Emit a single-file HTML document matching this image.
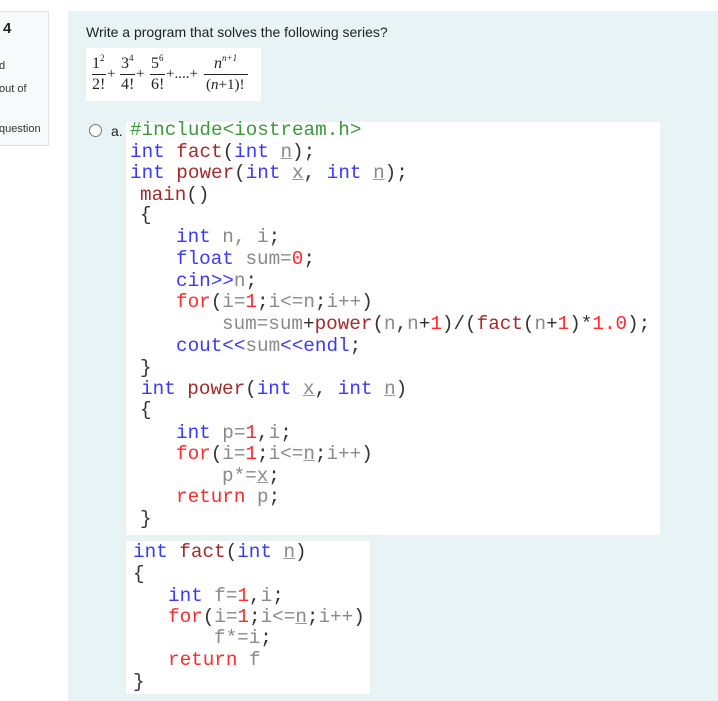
<!DOCTYPE html>
<html><head><style>
body{margin:0;width:718px;height:701px;position:relative;background:#fff;font-family:"Liberation Sans",sans-serif;overflow:hidden}
.lp{position:absolute;left:-2px;top:11px;width:49px;height:133px;background:#f8f9fa;border:1px solid #dee2e6}
.lp div{position:absolute;font-size:11px;color:#333;white-space:nowrap}
.main{position:absolute;left:68px;top:11px;width:650px;height:690px;background:#e7f3f5}
.cb{position:absolute;background:#fff}
.l{position:absolute;font-family:"Liberation Mono",monospace;font-size:19.3px;line-height:22px;white-space:pre;color:#333}
.k{color:#3a3aff}.f{color:#a52a2a}.v{color:#8a8a8a}.n{color:#ff2a2a}.g{color:#3a9a3a}
u{text-decoration-color:#999}
.m{position:absolute;font-family:"Liberation Serif",serif;color:#222;white-space:nowrap;line-height:18px}
sup{font-size:9px;vertical-align:7px;line-height:0}
</style></head><body>
<div class="lp">
<div style="left:4px;top:8px;font-size:15px;font-weight:bold;color:#222">4</div>
<div style="left:0;top:48px">d</div>
<div style="left:0;top:71px">out of</div>
<div style="left:0;top:111px">question</div>
</div>
<div class="main"></div>
<div style="position:absolute;left:86px;top:24px;font-size:14px;color:#222">Write a program that solves the following series?</div>
<div class="cb" style="left:86px;top:48px;width:175px;height:53px"></div>
<div class="m" style="left:92px;top:55px;font-size:16px">1<sup>2</sup></div>
<div style="position:absolute;left:92px;top:74px;width:14px;height:1px;background:#222"></div>
<div class="m" style="left:92px;top:76px;font-size:16px">2!</div>
<div class="m" style="left:107px;top:65px;font-size:15px">+</div>
<div class="m" style="left:121px;top:55px;font-size:16px">3<sup>4</sup></div>
<div style="position:absolute;left:120px;top:74px;width:15px;height:1px;background:#222"></div>
<div class="m" style="left:121px;top:76px;font-size:16px">4!</div>
<div class="m" style="left:136px;top:65px;font-size:15px">+</div>
<div class="m" style="left:151px;top:55px;font-size:16px">5<sup>6</sup></div>
<div style="position:absolute;left:150px;top:74px;width:15px;height:1px;background:#222"></div>
<div class="m" style="left:151px;top:76px;font-size:16px">6!</div>
<div class="m" style="left:166px;top:65px;font-size:15px">+....+</div>
<div class="m" style="left:214px;top:55px;font-size:16px;font-style:italic">n<sup>n+1</sup></div>
<div style="position:absolute;left:204px;top:74px;width:44px;height:1px;background:#222"></div>
<div class="m" style="left:206px;top:76px;font-size:15px">(<i>n</i>+1)!</div>
<div style="position:absolute;left:89px;top:124px;width:11px;height:11px;border:1px solid #777;border-radius:50%;background:#fff"></div>
<div style="position:absolute;left:111px;top:123px;font-size:14px;color:#222">a.</div>
<div class="cb" style="left:126px;top:122px;width:534px;height:413px"></div>
<div class="cb" style="left:126px;top:541px;width:244px;height:153px"></div>
<div class="l g" style="left:130px;top:119px">#include&lt;iostream.h&gt;</div>
<div class="l" style="left:130px;top:141px"><span class="k">int</span> <span class="f">fact</span>(<span class="k">int</span> <u class="v">n</u>);</div>
<div class="l" style="left:130px;top:162px"><span class="k">int</span> <span class="f">power</span>(<span class="k">int</span> <u class="v">x</u>, <span class="k">int</span> <u class="v">n</u>);</div>
<div class="l" style="left:140px;top:184px"><span class="f">main</span>()</div>
<div class="l" style="left:140px;top:204px">{</div>
<div class="l" style="left:176px;top:226px"><span class="k">int</span> <span class="v">n, i</span>;</div>
<div class="l" style="left:176px;top:248px"><span class="k">float</span> <span class="v">sum=</span><span class="n">0</span>;</div>
<div class="l" style="left:176px;top:270px"><span class="k">cin&gt;&gt;</span><span class="v">n</span>;</div>
<div class="l" style="left:176px;top:291px"><span class="n">for</span>(<span class="v">i=</span><span class="n">1</span>;<span class="v">i&lt;=n</span>;<span class="v">i++</span>)</div>
<div class="l" style="left:222px;top:313px"><span class="v">sum=sum</span>+<span class="f">power</span>(<span class="v">n</span>,<span class="v">n</span>+<span class="n">1</span>)/(<span class="f">fact</span>(<span class="v">n</span>+<span class="n">1</span>)*<span class="n">1.0</span>);</div>
<div class="l" style="left:176px;top:335px"><span class="k">cout&lt;&lt;</span><span class="v">sum</span><span class="k">&lt;&lt;endl</span>;</div>
<div class="l" style="left:140px;top:357px">}</div>
<div class="l" style="left:141px;top:378px"><span class="k">int</span> <span class="f">power</span>(<span class="k">int</span> <u class="v">x</u>, <span class="k">int</span> <u class="v">n</u>)</div>
<div class="l" style="left:140px;top:399px">{</div>
<div class="l" style="left:176px;top:422px"><span class="k">int</span> <span class="v">p=</span><span class="n">1</span>,<span class="v">i</span>;</div>
<div class="l" style="left:176px;top:443px"><span class="n">for</span>(<span class="v">i=</span><span class="n">1</span>;<span class="v">i&lt;=<u>n</u></span>;<span class="v">i++</span>)</div>
<div class="l" style="left:222px;top:465px"><span class="v">p*=<u>x</u></span>;</div>
<div class="l" style="left:176px;top:486px"><span class="n">return</span> <span class="v">p</span>;</div>
<div class="l" style="left:140px;top:508px">}</div>
<div class="l" style="left:133px;top:541px"><span class="k">int</span> <span class="f">fact</span>(<span class="k">int</span> <u class="v">n</u>)</div>
<div class="l" style="left:133px;top:563px">{</div>
<div class="l" style="left:168px;top:585px"><span class="k">int</span> <span class="v">f=</span><span class="n">1</span>,<span class="v">i</span>;</div>
<div class="l" style="left:168px;top:606px"><span class="n">for</span>(<span class="v">i=</span><span class="n">1</span>;<span class="v">i&lt;=<u>n</u></span>;<span class="v">i++</span>)</div>
<div class="l" style="left:214px;top:627px"><span class="v">f*=i</span>;</div>
<div class="l" style="left:168px;top:649px"><span class="n">return</span> <span class="v">f</span></div>
<div class="l" style="left:133px;top:671px">}</div>
</body></html>
